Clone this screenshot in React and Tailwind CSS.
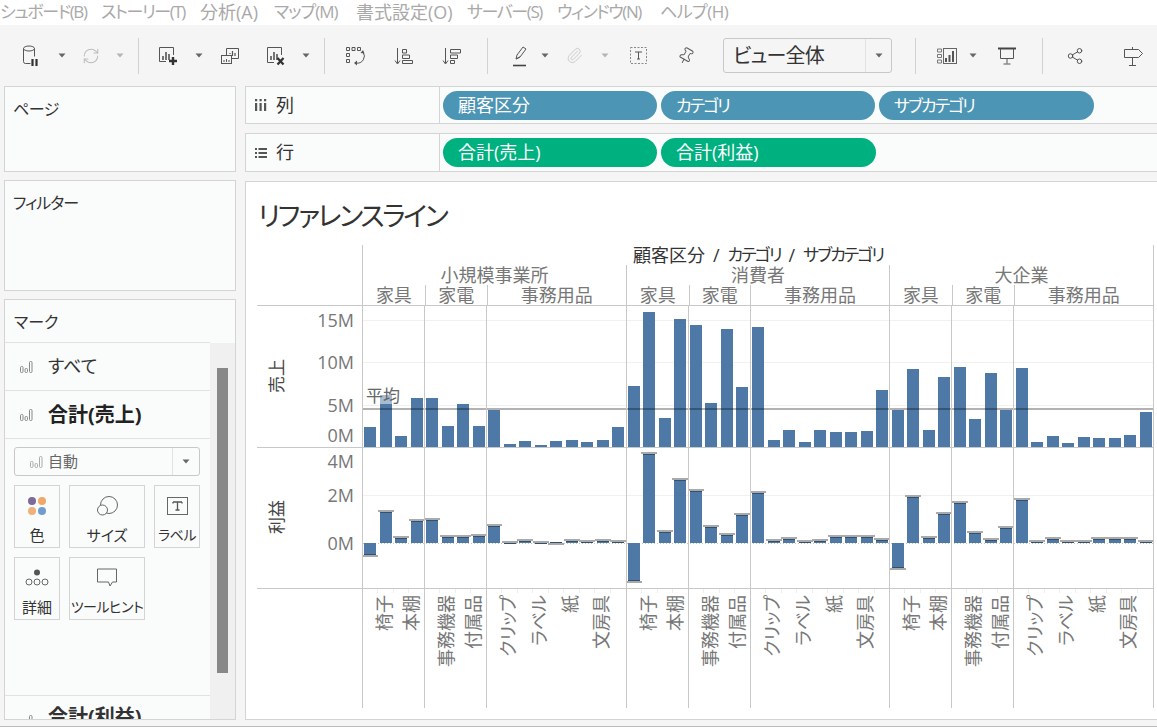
import React from 'react';
import { RefreshCw, Paperclip, Pin, Share2 } from 'lucide-react';

const menus = [
    { label: 'シュボード(B)', c: 'w-[101px] text-[17px] tracking-[-1.4px]' },
    { label: 'ストーリー(T)', c: 'w-[99px] text-[17px] tracking-[-1.4px]' },
    { label: '分析(A)', c: 'w-[74px] text-[18px]' },
    { label: 'マップ(M)', c: 'w-[82px] text-[17px] tracking-[-1px]' },
    { label: '書式設定(O)', c: 'w-[111px] text-[18px]' },
    { label: 'サーバー(S)', c: 'w-[90px] text-[17px] tracking-[-1.4px]' },
    { label: 'ウィンドウ(N)', c: 'w-[103px] text-[17px] tracking-[-1.4px]' },
    { label: 'ヘルプ(H)', c: 'w-[80px] text-[17px] tracking-[-0.5px]' },
];

// y of each bar's top in page coordinates, 17 sub-categories x 3 segments
const salesTops = [
    427, 395, 436, 398, 398, 426, 404, 426, 410, 444, 441, 445, 441, 440, 442, 440, 427,
    386, 312, 418, 319, 325, 403, 329, 387, 327, 440, 430, 442, 430, 432, 432, 431, 390,
    410, 369, 430, 377, 367, 419, 373, 410, 368, 442, 436, 443, 437, 438, 438, 435, 412,
];
const profitEnds = [
    556, 511, 537, 520, 519, 536, 536, 535, 525, 542, 540, 542, 544, 540, 541, 540, 541,
    582, 453, 531, 479, 490, 526, 534, 514, 492, 540, 538, 541, 540, 536, 536, 536, 539,
    569, 496, 537, 513, 502, 532, 539, 527, 499, 541, 538, 541, 541, 538, 538, 538, 541,
];
const vLines = [362, 424, 486, 626, 688, 750, 889, 951, 1013, 1153];
const barX = (i) => Math.round(364 + i * 15.52);

const cats = [
    { name: '家具', labels: ['', '椅子', '', '本棚'], w: 'w-[62px]', last: 3 },
    { name: '家電', labels: ['', '事務機器', '', '付属品'], w: 'w-[62px]', last: 3 },
    { name: '事務用品', labels: ['', 'クリップ', '', 'ラベル', '', '紙', '', '文房具', ''], w: 'w-[140px]', last: -1 },
];
const segments = [
    { name: '小規模事業所', w: 'w-[264px]' },
    { name: '消費者', w: 'w-[263px]' },
    { name: '大企業', w: 'w-[264px]' },
];

function Caret({ light }) {
    return (
        <svg width="8" height="5" viewBox="0 0 8 5">
            <path d="M0.5 0.5h7L4 4.5z" fill={light ? '#b5b5b5' : '#666'} />
        </svg>
    );
}

function Sep() {
    return <div className="w-px h-[36px] bg-[#d2d2d2]" />;
}

function Slot({ w, children }) {
    return <div className={`${w} shrink-0 flex items-center justify-center`}>{children}</div>;
}

function Ico({ children, w = 20, h = 20 }) {
    return (
        <svg width={w} height={h} viewBox={`0 0 ${w} ${h}`} fill="none" stroke="#555" strokeWidth="1" className="shrink-0">
            {children}
        </svg>
    );
}

function Bars3({ x, y }) {
    return <path d={`M${x} ${y}v-4M${x + 3} ${y}v-8M${x + 6} ${y}v-6`} stroke="#555" strokeWidth="1.6" />;
}

function MarkIcon({ color = '#888' }) {
    return (
        <svg width="13" height="12" viewBox="0 0 13 12" fill="none" stroke={color} strokeWidth="1">
            <rect x="0.5" y="5.5" width="2.5" height="6" rx="1" />
            <rect x="5" y="7.5" width="2.5" height="4" rx="1" />
            <rect x="9.5" y="0.5" width="2.5" height="11" rx="1" />
        </svg>
    );
}

function Toolbar() {
    return (
        <div className="h-[61px] shrink-0 pl-[16px] flex items-center overflow-hidden">
            <Slot w="w-[30px]">
                <Ico w={18} h={22}>
                    <ellipse cx="7" cy="3.5" rx="5.5" ry="2.5" />
                    <path d="M1.5 3.5v13a2 2 0 0 0 2 2h5M12.5 3.5v8" />
                    <path d="M10.5 14v7M14.5 14v7" stroke="#333" strokeWidth="2.2" />
                </Ico>
            </Slot>
            <Slot w="w-[31px]"><Caret /></Slot>
            <Slot w="w-[28px]"><RefreshCw size={18} strokeWidth={1.4} color="#bdbdbd" /></Slot>
            <Slot w="w-[30px]"><Caret light /></Slot>
            <Slot w="w-[7px]"><Sep /></Slot>
            <Slot w="w-[52px]">
                <Ico h={20}>
                    <path d="M8 15.5H1.5V1.5h14V9" />
                    <Bars3 x={5} y={14} />
                    <path d="M15 11v8M11 15h8" stroke="#333" strokeWidth="2.4" />
                </Ico>
            </Slot>
            <Slot w="w-[9px]"><Caret /></Slot>
            <Slot w="w-[53px]">
                <Ico h={18}>
                    <rect x="1.5" y="8.5" width="10" height="8" />
                    <path d="M6.5 8.5v-7h12v10h-7" />
                    <path d="M10 7v-1M12.5 9v-5M15 9v-3" stroke="#555" strokeWidth="1.2" />
                    <path d="M4 15v-2M6.5 15v-3M9 15v-2" stroke="#555" strokeWidth="1" />
                </Ico>
            </Slot>
            <Slot w="w-[40px]">
                <Ico h={20}>
                    <path d="M8 16.5H1.5V1.5h14V9" />
                    <Bars3 x={5} y={14} />
                    <path d="M11.5 12l6 6.5M17.5 12l-6 6.5" stroke="#333" strokeWidth="2.3" />
                </Ico>
            </Slot>
            <Slot w="w-[20px]"><Caret /></Slot>
            <Slot w="w-[16px]"><Sep /></Slot>
            <Slot w="w-[46px]">
                <Ico h={20}>
                    <path d="M1.5 1.5h3v3h-3zM7 1.5h3v3H7zM12.5 1.5h3v3h-3zM1.5 7.5h3v3h-3zM1.5 13.5h3v3h-3z" />
                    <path d="M18 6a7 7 0 0 1-7 11" />
                    <path d="M15.5 7l2.5-3 1.500 3.500zM12 14.500l-3 2.500 3 2.500z" fill="#555" stroke="none" />
                </Ico>
            </Slot>
            <Slot w="w-[52px]">
                <Ico h={18}>
                    <path d="M3.500 1v15M1 13.500l2.500 3.500 2.500-3.500" />
                    <path d="M8.500 2.500h4v3.500h-4zM8.500 8h7v3.500h-7zM8.500 13.500h10v3h-10z" />
                </Ico>
            </Slot>
            <Slot w="w-[44px]">
                <Ico h={18}>
                    <path d="M3.500 1v15M1 13.500l2.500 3.500 2.500-3.500" />
                    <path d="M8.500 2.500h10v3.500h-10zM8.500 8h7v3.500h-7zM8.500 13.500h4v3h-4z" />
                </Ico>
            </Slot>
            <Slot w="w-[26px]"><Sep /></Slot>
            <Slot w="w-[39px]">
                <Ico w={16} h={22}>
                    <path d="M4 14l1-4 6-8 3 2-6 8zM4 14l4-2" />
                    <path d="M1 20.500h13" stroke="#444" strokeWidth="1.6" />
                </Ico>
            </Slot>
            <Slot w="w-[12px]"><Caret /></Slot>
            <Slot w="w-[46px]"><Paperclip size={17} strokeWidth={1.2} color="#c4c4c4" /></Slot>
            <Slot w="w-[16px]"><Caret light /></Slot>
            <Slot w="w-[51px]">
                <Ico w={17} h={17}>
                    <rect x="0.5" y="0.5" width="16" height="16" strokeDasharray="2 1.500" stroke="#888" />
                    <path d="M5 5h7M8.500 5v7M7 12h3" stroke="#555" />
                </Ico>
            </Slot>
            <Slot w="w-[43px]"><Pin size={18} strokeWidth={1.2} color="#555" className="rotate-[30deg]" /></Slot>
            <div className="w-[16px] shrink-0" />
            <div className="w-[169px] h-[35px] shrink-0 flex border border-[#c8c8c8] rounded-[3px]">
                <div className="w-[142px] pl-[9px] text-[20px] leading-[33px] tracking-[-0.8px] text-[#333] border-r border-[#e2e2e2]">ビュー全体</div>
                <div className="flex-1 flex items-center justify-center"><Caret /></div>
            </div>
            <Slot w="w-[46px]"><Sep /></Slot>
            <Slot w="w-[18px]">
                <Ico w={20} h={16}>
                    <path d="M0.500 1h4v3h-4zM0.500 6.500h4v3h-4zM0.500 12h4v3h-4z" stroke="#777" />
                    <rect x="6.500" y="0.500" width="13" height="15" stroke="#666" />
                    <path d="M9 14v-4M12.500 14V7M16 14V3" stroke="#555" strokeWidth="2" />
                </Ico>
            </Slot>
            <Slot w="w-[33px]"><Caret /></Slot>
            <Slot w="w-[36px]">
                <Ico w={18} h={18}>
                    <path d="M0 1.500h18" stroke="#444" strokeWidth="2" />
                    <path d="M2.500 2v9.500h13V2M9 11.500v5M5.500 17h7" />
                </Ico>
            </Slot>
            <Slot w="w-[34px]"><Sep /></Slot>
            <Slot w="w-[32px]"><Share2 size={18} strokeWidth={1.2} color="#444" /></Slot>
            <Slot w="w-[84px]">
                <Ico w={19} h={20}>
                    <path d="M0.500 3.500h14l4 4-4 4H0.500zM8.500 1v2.500M8.500 11.500V19M5 19.500h7" />
                </Ico>
            </Slot>
        </div>
    );
}

function Pill({ color, children, w, kana }) {
    return (
        <div className={`${w} h-[29px] rounded-full ${color} text-white ${kana ? 'text-[17px] tracking-[-2px]' : 'text-[18px]'} leading-[29px] pl-[15px]`}>
            {children}
        </div>
    );
}

function Shelf({ icon, title, className, children }) {
    return (
        <div className={`flex border-y border-l border-[#d4d4d4] bg-[#fafbfb] ${className}`}>
            <div className="w-[194px] shrink-0 flex items-center pl-[9px] gap-[9px] border-r border-[#d4d4d4]">
                {icon}
                <span className="text-[18px] text-[#333]">{title}</span>
            </div>
            <div className="flex items-center gap-[4px] pl-[3px]">{children}</div>
        </div>
    );
}

function MarkCard({ w, icon, label, small }) {
    return (
        <div className={`${w} h-[63px] border border-[#d4d4d4] flex flex-col items-center overflow-hidden`}>
            <div className="h-[39px] shrink-0 flex items-center justify-center">{icon}</div>
            <div className={`${small ? 'text-[14px] tracking-[-0.5px]' : 'text-[15px]'} leading-[20px] text-[#333] whitespace-nowrap`}>{label}</div>
        </div>
    );
}

function MarksCard() {
    return (
        <div className="h-[421px] border border-[#d4d4d4] bg-[#fafbfb] flex flex-col overflow-hidden">
            <div className="h-[43px] shrink-0 pl-[9px] text-[16px] leading-[44px] text-[#333] border-b border-[#e2e2e2] w-[205px]">マーク</div>
            <div className="flex flex-1 min-h-0">
                <div className="w-[205px] shrink-0 flex flex-col">
                    <div className="h-[48px] shrink-0 flex items-center pl-[15px] gap-[15px] border-b border-[#e2e2e2]">
                        <MarkIcon />
                        <span className="text-[18px] text-[#333]">すべて</span>
                    </div>
                    <div className="h-[48px] shrink-0 flex items-center pl-[15px] gap-[15px] border-b border-[#e2e2e2]">
                        <MarkIcon />
                        <span className="text-[20px] font-bold text-[#222]">合計(売上)</span>
                    </div>
                    <div className="mt-[8px] ml-[9px] w-[186px] h-[29px] shrink-0 flex border border-[#c8c8c8] rounded-[3px]">
                        <div className="w-[158px] flex items-center pl-[15px] gap-[5px] border-r border-[#e2e2e2]">
                            <MarkIcon color="#aaa" />
                            <span className="text-[15px] text-[#666]">自動</span>
                        </div>
                        <div className="flex-1 flex items-center justify-center"><Caret /></div>
                    </div>
                    <div className="mt-[9px] ml-[9px] flex flex-col gap-[9px]">
                        <div className="flex gap-[9px]">
                            <MarkCard w="w-[46px]" label="色" icon={
                                <svg width="20" height="20" viewBox="0 0 20 20">
                                    <circle cx="5" cy="5" r="4" fill="#7c6a9c" />
                                    <circle cx="15" cy="5" r="4" fill="#f0a868" />
                                    <circle cx="5" cy="15" r="4" fill="#f0b07a" />
                                    <circle cx="15" cy="15" r="4" fill="#729ccb" />
                                </svg>
                            } />
                            <MarkCard w="w-[76px]" label="サイズ" icon={
                                <Ico w={22} h={22}>
                                    <circle cx="13" cy="10" r="8.500" stroke="#666" />
                                    <circle cx="6.500" cy="15" r="5" stroke="#666" fill="#fafbfb" />
                                </Ico>
                            } />
                            <MarkCard w="w-[46px]" label="ラベル" small icon={
                                <Ico w={21} h={18}>
                                    <rect x="0.500" y="0.500" width="20" height="17" stroke="#666" />
                                    <path d="M6 5h9M10.500 5v8M8.500 13h4M6 5v1.500M15 5v1.500" stroke="#555" strokeWidth="1.300" />
                                </Ico>
                            } />
                        </div>
                        <div className="flex gap-[9px]">
                            <MarkCard w="w-[46px]" label="詳細" icon={
                                <svg width="24" height="18" viewBox="0 0 24 18" fill="none" stroke="#666">
                                    <circle cx="12" cy="3.500" r="3" fill="#555" stroke="none" />
                                    <circle cx="4" cy="13" r="3" />
                                    <circle cx="12" cy="13" r="3" />
                                    <circle cx="20" cy="13" r="3" />
                                </svg>
                            } />
                            <MarkCard w="w-[76px]" label="ツールヒント" small icon={
                                <Ico w={22} h={20}>
                                    <path d="M1.500 1h19v13h-4l-2.500 4-1.500-4h-11z" stroke="#666" />
                                </Ico>
                            } />
                        </div>
                    </div>
                    <div className="flex-1" />
                    <div className="h-[24px] shrink-0 pl-[15px] gap-[15px] flex border-t border-[#e2e2e2] overflow-hidden">
                        <div className="pt-[19px]"><MarkIcon /></div>
                        <span className="text-[20px] font-bold text-[#333] pt-[6px]">合計(利益)</span>
                    </div>
                </div>
                <div className="flex-1 bg-[#f0f0f0] pl-[7px] pt-[25px]">
                    <div className="w-[11px] h-[305px] bg-[#888888]" />
                </div>
            </div>
        </div>
    );
}

function PlotFrame({ y, h, grid, children }) {
    return (
        <svg width="792" height={h} viewBox={`362 ${y} 792 ${h}`} shapeRendering="crispEdges" className="block shrink-0">
            {grid.map((g) => <rect key={g} x="363" y={g} width="790" height="1" fill="#f1f1f1" />)}
            {children}
            {vLines.map((x) => <rect key={x} x={x} y={y} width="1" height={h} fill="#c8c8c8" />)}
        </svg>
    );
}

function SalesPlot() {
    return (
        <PlotFrame y={306} h={141} grid={[320, 362, 405]}>
            {salesTops.map((top, i) => (
                <rect key={i} x={barX(i)} y={top} width="12" height={447 - top} fill="#4e79a7" />
            ))}
            <rect x="363" y="408" width="790" height="2" fill="#000" fillOpacity="0.3" />
        </PlotFrame>
    );
}

function ProfitPlot() {
    return (
        <PlotFrame y={448} h={140} grid={[495]}>
            <line x1="363" x2="1153" y1="543.500" y2="543.500" stroke="#c4c4c4" strokeDasharray="1 2" />
            {profitEnds.map((end, i) => {
                const neg = end > 543;
                return (
                    <g key={i}>
                        <rect x={barX(i)} y={neg ? 543 : end} width="12" height={Math.abs(end - 543)} fill="#4e79a7" />
                        <rect x={barX(i) - 2} y={end - 1} width="16" height="2" fill="#aaaaaa" />
                        <rect x={barX(i)} y={neg ? end - 2 : end + 1} width="12" height="1" fill="#34506f" />
                    </g>
                );
            })}
        </PlotFrame>
    );
}

function Tick({ className, children }) {
    return <span className={`absolute right-[8px] text-[18px] leading-[20px] text-[#777] ${className}`}>{children}</span>;
}

function Chart() {
    return (
        <div className="ml-[11px] w-[897px]">
            {/* Header */}
            <div className="flex h-[60px]">
                <div className="w-[105px] shrink-0" />
                <div className="flex flex-col border-r border-[#c8c8c8]">
                    <div className="h-[20px] border-l border-[#c8c8c8] flex justify-center gap-[8px] text-[18px] leading-[20px] text-[#333]">
                        <span>顧客区分</span>
                        <span>/</span>
                        <span className="text-[17px] tracking-[-2px]">カテゴリ</span>
                        <span>/</span>
                        <span className="text-[17px] tracking-[-2px]">サブカテゴリ</span>
                    </div>
                    <div className="flex h-[40px]">
                        {segments.map((s) => (
                            <div key={s.name} className={`${s.w} shrink-0 border-l border-[#c8c8c8] flex flex-col`}>
                                <div className="h-[20px] text-center text-[18px] leading-[20px] text-[#777]">{s.name}</div>
                                <div className="h-[20px] flex">
                                    {cats.map((c, i) => (
                                        <div key={c.name} className={`${c.w} ${i > 0 ? 'border-l border-[#c8c8c8]' : ''} text-center text-[18px] leading-[20px] text-[#777]`}>{c.name}</div>
                                    ))}
                                </div>
                            </div>
                        ))}
                    </div>
                </div>
            </div>

            {/* Sales pane */}
            <div className="flex border-t border-[#c8c8c8]">
                <div className="w-[105px] shrink-0 relative">
                    <span className="absolute left-[10px] top-[53px] [writing-mode:vertical-rl] [text-orientation:sideways] rotate-180 text-[17px] leading-[20px] text-[#444]">売上</span>
                    <Tick className="top-[4px]">15M</Tick>
                    <Tick className="top-[46px]">10M</Tick>
                    <Tick className="top-[89px]">5M</Tick>
                    <Tick className="top-[119px]">0M</Tick>
                </div>
                <div className="relative">
                    <SalesPlot />
                    <span className="absolute left-[4px] top-[81px] h-[17px] bg-white/50 text-[17px] leading-[17px] text-[#666]">平均</span>
                </div>
            </div>

            {/* Profit pane */}
            <div className="flex border-t border-[#c8c8c8]">
                <div className="w-[105px] shrink-0 relative">
                    <span className="absolute left-[10px] top-[52px] [writing-mode:vertical-rl] [text-orientation:sideways] rotate-180 text-[17px] leading-[20px] text-[#444]">利益</span>
                    <Tick className="top-[3px]">4M</Tick>
                    <Tick className="top-[37px]">2M</Tick>
                    <Tick className="top-[85px]">0M</Tick>
                </div>
                <ProfitPlot />
            </div>

            {/* Sub-category labels */}
            <div className="flex border-t border-[#c8c8c8] h-[120px]">
                <div className="w-[105px] shrink-0" />
                <div className="flex border-r border-[#c8c8c8]">
                    {segments.map((s) => (
                        <div key={s.name} className={`${s.w} shrink-0 flex`}>
                            {cats.map((c) => (
                                <div key={c.name} className={`${c.w} shrink-0 flex border-l border-[#c8c8c8]`}>
                                    {c.labels.map((label, i) => (
                                        <div key={i} className="flex-1 min-w-0 flex flex-col items-center">
                                            <div className={`h-[4px] w-full shrink-0 ${i < c.labels.length - 1 ? 'border-r border-[#eeeeee]' : ''}`} />
                                            {label && (
                                                <span className={`shrink-0 mt-[2px] relative [writing-mode:vertical-rl] [text-orientation:sideways] rotate-180 whitespace-nowrap text-[18px] leading-[20px] text-[#777] ${i === c.last ? 'right-[5px]' : 'right-[2px]'}`}>{label}</span>
                                            )}
                                        </div>
                                    ))}
                                </div>
                            ))}
                        </div>
                    ))}
                </div>
            </div>
        </div>
    );
}

export default function App() {
    return (
        <div className="w-[1157px] h-[727px] overflow-hidden bg-[#f5f5f5] flex flex-col font-['Open_Sans','Noto_Sans_CJK_JP',sans-serif] [font-feature-settings:'palt']">
            {/* Menu */}
            <div className="h-[25px] shrink-0 bg-white flex leading-[24px] text-[#a9a9a9] whitespace-nowrap">
                {menus.map((m) => <span key={m.label} className={m.c}>{m.label}</span>)}
            </div>

            <Toolbar />

            <div className="h-[634px] shrink-0 flex">
                {/* Left side cards */}
                <div className="w-[232px] shrink-0 ml-[4px] flex flex-col gap-[8px]">
                    <div className="h-[86px] border border-[#d4d4d4] bg-[#fafbfb] pl-[8px] pt-[10px] text-[16px] tracking-[-0.5px] text-[#333]">ページ</div>
                    <div className="h-[111px] border border-[#d4d4d4] bg-[#fafbfb] pl-[8px] pt-[10px] text-[16px] tracking-[-1px] text-[#333]">フィルター</div>
                    <MarksCard />
                </div>

                {/* Shelves and view */}
                <div className="flex-1 ml-[9px] flex flex-col min-w-0">
                    <Shelf title="列" className="h-[38px]" icon={
                        <svg width="12" height="12" viewBox="0 0 12 12" fill="#555">
                            <path d="M0 4h2.200v8H0zM4.500 4h2.200v8H4.500zM9 4h2.200v8H9zM0 0h2.200v2.200H0zM4.500 0h2.200v2.200H4.500zM9 0h2.200v2.200H9z" />
                        </svg>
                    }>
                        <Pill w="w-[214px]" color="bg-[#4c95b4]">顧客区分</Pill>
                        <Pill w="w-[214px]" color="bg-[#4c95b4]" kana>カテゴリ</Pill>
                        <Pill w="w-[215px]" color="bg-[#4c95b4]" kana>サブカテゴリ</Pill>
                    </Shelf>
                    <Shelf title="行" className="h-[39px] mt-[9px]" icon={
                        <svg width="12" height="12" viewBox="0 0 12 12" fill="#555">
                            <path d="M0 1h2v2H0zM3.500 1H12v2H3.500zM0 5h2v2H0zM3.500 5H12v2H3.500zM0 9h2v2H0zM3.500 9H12v2H3.500z" />
                        </svg>
                    }>
                        <Pill w="w-[214px]" color="bg-[#00b180]">合計(売上)</Pill>
                        <Pill w="w-[215px]" color="bg-[#00b180]">合計(利益)</Pill>
                    </Shelf>
                    <div className="mt-[9px] flex-1 min-h-0 bg-white border-y border-l border-[#d4d4d4] overflow-hidden">
                        <div className="h-[63px] pl-[12px] pt-[14px] text-[27px] leading-[40px] tracking-[-2.3px] text-[#333]">リファレンスライン</div>
                        <Chart />
                    </div>
                </div>
            </div>
            <div className="flex-1 border-b border-[#bbbbbb]" />
        </div>
    );
}
